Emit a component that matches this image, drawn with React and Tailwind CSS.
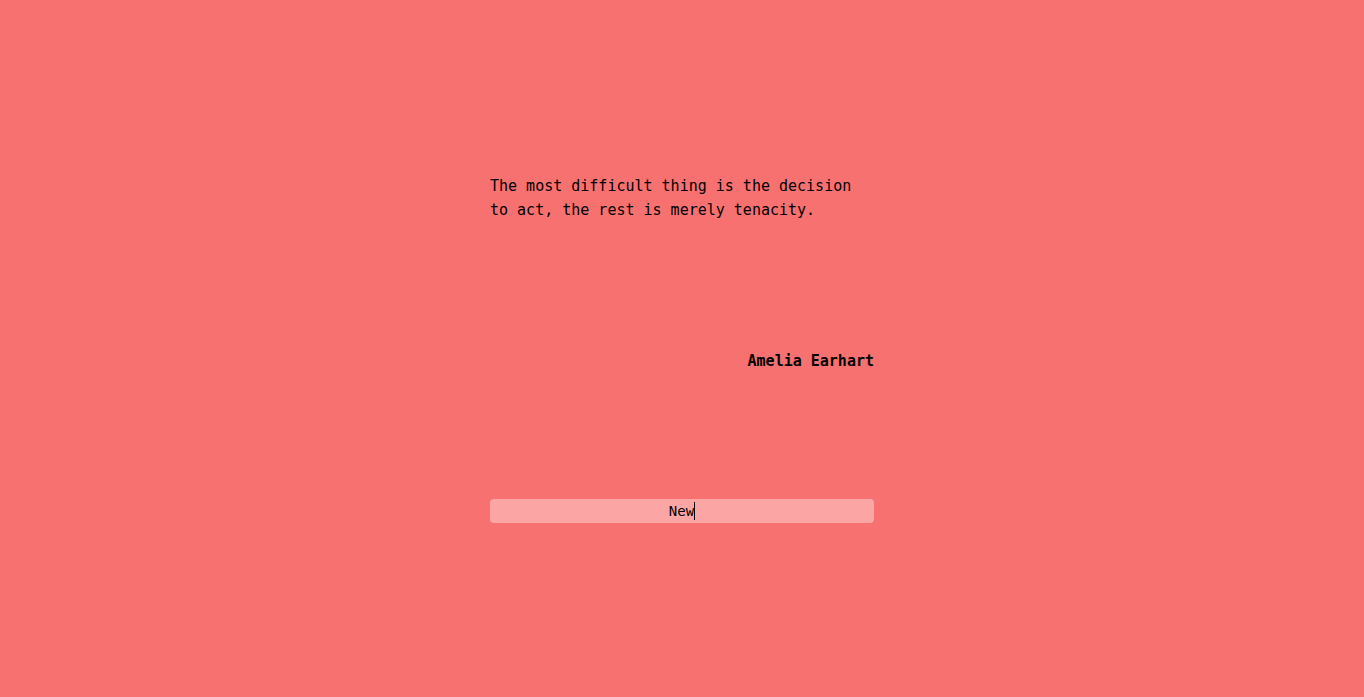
import React from 'react';

const quote = {
  text: 'The most difficult thing is the decision to act, the rest is merely tenacity.',
  author: 'Amelia Earhart',
};

const App = () => {
  return (
    <div className="min-h-screen w-full bg-[#f87171] flex items-center justify-center font-['DejaVu_Sans_Mono',monospace] text-black">
      <div className="w-96 flex flex-col">
        <p className="text-[15px] leading-6">{quote.text}</p>
        <p className="mt-[127px] text-right text-[15px] leading-6 font-bold">{quote.author}</p>
        <button className="mt-[126px] h-6 w-full rounded bg-[#fca5a5] flex items-center justify-center text-sm">
          <span>New</span>
          <span className="h-[18px] w-px bg-black"></span>
        </button>
      </div>
    </div>
  );
};

export default App;
